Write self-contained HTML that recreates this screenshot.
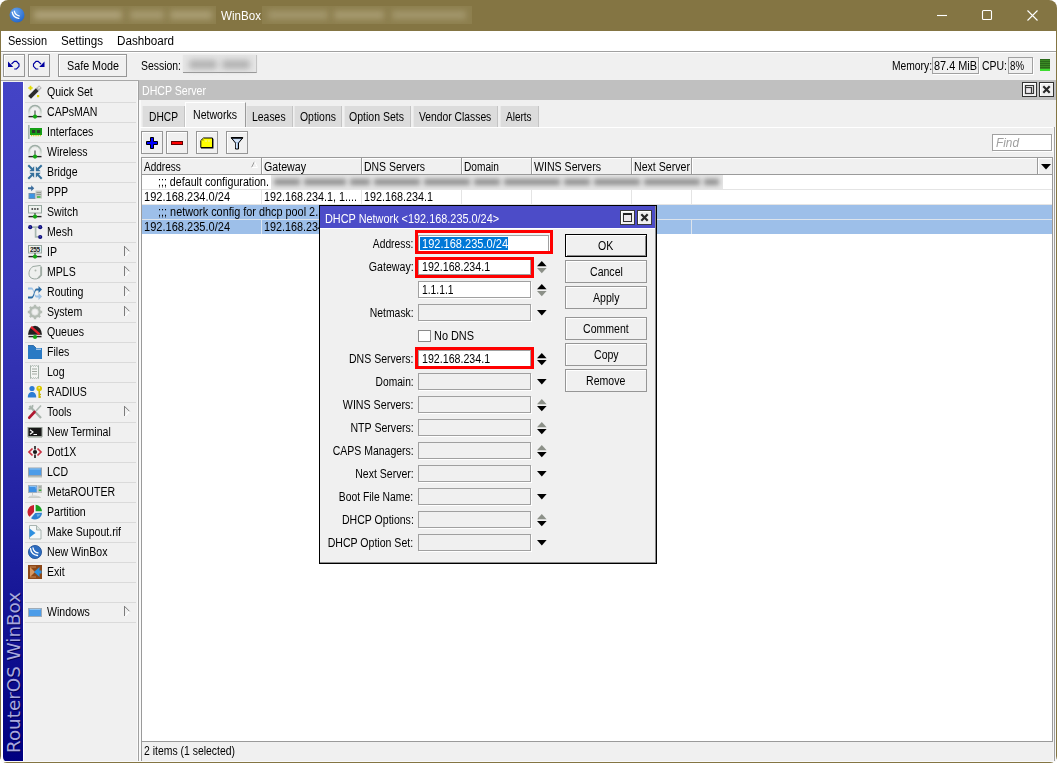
<!DOCTYPE html>
<html><head><meta charset="utf-8"><title>WinBox</title>
<style>
html,body{margin:0;padding:0}
body{width:1057px;height:763px;position:relative;overflow:hidden;background:#f0f0f0;font-family:"Liberation Sans",sans-serif;font-size:12px;color:#000}
div,span.t,svg{position:absolute;box-sizing:border-box}
span.t{white-space:nowrap;line-height:14px;height:14px}
.btn{background:#f0f0f0;border:1px solid #969696;box-shadow:inset 1px 1px 0 #fff}
.inp{background:#fff;border:1px solid #a0a0a0;box-shadow:1px 1px 0 #fff}
.inpd{background:#f0f0f0;border:1px solid #a0a0a0;box-shadow:1px 1px 0 #fff}
.red{border:3px solid #f00}
.tab{background:#dcdcdc}

</style></head>
<body>
<div class="" style="left:0px;top:0px;width:1057px;height:763px;background:#fff"></div>
<div class="" style="left:0px;top:0px;width:1057px;height:763px;background:#847543;border-radius:8px 8px 7px 7px"></div>
<div class="" style="left:1px;top:31px;width:1055px;height:20px;background:#fff"></div>
<div class="" style="left:1px;top:51px;width:1055px;height:711px;background:#f0f0f0;border-radius:0 0 6px 6px"></div>
<div class="" style="left:1px;top:81px;width:2px;height:681px;background:#fff;border-radius:0 0 0 6px"></div>
<div class="" style="left:23px;top:81px;width:1px;height:681px;background:#fff"></div>
<div class="" style="left:30px;top:6px;width:186px;height:18px;background:#8d7f4e;overflow:hidden"><div style="left:4px;top:5px;width:88px;height:8px;background:#b0a47c;filter:blur(3px)"></div><div style="left:100px;top:5px;width:34px;height:8px;background:#a89c72;filter:blur(3px)"></div><div style="left:140px;top:5px;width:42px;height:8px;background:#aca076;filter:blur(3px)"></div></div>
<div class="" style="left:262px;top:6px;width:210px;height:18px;background:#8d7f4e;overflow:hidden"><div style="left:6px;top:5px;width:60px;height:8px;background:#a4986e;filter:blur(3px)"></div><div style="left:72px;top:5px;width:50px;height:8px;background:#a89c72;filter:blur(3px)"></div><div style="left:130px;top:5px;width:74px;height:8px;background:#a4986e;filter:blur(3px)"></div></div>
<svg style="left:9px;top:7px" width="16" height="16" viewBox="0 0 16 16"><defs><radialGradient id="gi" cx=".4" cy=".3" r=".8"><stop offset="0" stop-color="#6aa8f0"/><stop offset="1" stop-color="#1d5fc4"/></radialGradient><linearGradient id="gw" x1="0" y1="0" x2="0" y2="1" gradientUnits="objectBoundingBox"><stop offset="0" stop-color="#9cacA4"/><stop offset=".5" stop-color="#bcc8c0"/><stop offset="1" stop-color="#e8ece8"/></linearGradient></defs><circle cx="8" cy="8" r="7.5" fill="url(#gi)"/><path d="M3.2 5.2c.6 3.6 3 5.8 6.6 6.2" stroke="#fff" stroke-width="1.3" fill="none" stroke-linecap="round"/><path d="M5.3 4.2c.5 2.6 2.3 4.2 4.9 4.6" stroke="#fff" stroke-width="1.2" fill="none" stroke-linecap="round"/></svg>
<span class="t" style="top:9px;left:221px;transform:scaleX(0.967);transform-origin:0 0;color:#fff;">WinBox</span>
<svg style="left:930px;top:0" width="127" height="31" viewBox="0 0 127 31"><g stroke="#fff" stroke-width="1.1" fill="none"><path d="M7 15.500h10"/><rect x="52.5" y="10.5" width="9" height="9" rx="1"/><path d="M97.5 10.5l10 10M107.5 10.5l-10 10"/></g></svg>
<span class="t" style="top:34px;left:8px;transform:scaleX(0.914);transform-origin:0 0;">Session</span>
<span class="t" style="top:34px;left:61px;transform:scaleX(0.969);transform-origin:0 0;">Settings</span>
<span class="t" style="top:34px;left:117px;transform:scaleX(0.971);transform-origin:0 0;">Dashboard</span>
<div class="" style="left:1px;top:51px;width:1055px;height:1px;background:#a0a0a0"></div>
<div class="" style="left:1px;top:52px;width:1055px;height:1px;background:#fff"></div>
<div class="" style="left:1px;top:80px;width:1055px;height:1px;background:#a8a8a8"></div>
<div class="btn" style="left:3px;top:54px;width:22px;height:23px;"></div>
<div class="btn" style="left:28px;top:54px;width:22px;height:23px;"></div>
<div class="btn" style="left:58px;top:54px;width:69px;height:23px;"></div>
<svg style="left:7px;top:58px" width="14" height="14" viewBox="0 0 14 14"><path d="M4.500 6L7.400 3.300H9.500L12 6V8.300L9.500 11H7.200" stroke="#0000a0" stroke-width="1.150" fill="none"/><path d="M1 3.600V9H6.300z" fill="#0000a0"/></svg>
<svg style="left:32px;top:58px" width="14" height="14" viewBox="0 0 14 14"><path d="M9 6L6.100 3.300H4L1.500 6V8.300L4 11H6.300" stroke="#0000a0" stroke-width="1.150" fill="none"/><path d="M12.500 3.600V9H7.200z" fill="#0000a0"/></svg>
<span class="t" style="top:59px;left:67px;transform:scaleX(0.896);transform-origin:0 0;">Safe Mode</span>
<span class="t" style="top:59px;left:141px;transform:scaleX(0.869);transform-origin:0 0;">Session:</span>
<div class="" style="left:183px;top:55px;width:74px;height:18px;background:#e6e6e6;border-bottom:1px solid #999;border-right:1px solid #c4c4c4;box-shadow:0 0 2px #e6e6e6"></div>
<div class="" style="left:189px;top:60px;width:28px;height:9px;background:#a8a8a8;filter:blur(3px);opacity:.85"></div>
<div class="" style="left:222px;top:60px;width:28px;height:9px;background:#a8a8a8;filter:blur(3px);opacity:.85"></div>
<span class="t" style="top:59px;left:892px;transform:scaleX(0.857);transform-origin:0 0;">Memory:</span>
<div class="inpd" style="left:932px;top:57px;width:47px;height:17px;"></div>
<span class="t" style="top:59px;left:934px;transform:scaleX(0.908);transform-origin:0 0;">87.4 MiB</span>
<span class="t" style="top:59px;left:982px;transform:scaleX(0.872);transform-origin:0 0;">CPU:</span>
<div class="inpd" style="left:1008px;top:57px;width:25px;height:17px;"></div>
<span class="t" style="top:59px;left:1010px;transform:scaleX(0.807);transform-origin:0 0;">8%</span>
<div class="" style="left:1040px;top:59px;width:10px;height:12px;background:repeating-linear-gradient(#2a6a1a 0,#2a6a1a 1px,#3a8a24 1px,#3a8a24 2px);border-bottom:2px solid #3ddc30"></div>
<div class="" style="left:3px;top:82px;width:20px;height:680px;background:linear-gradient(#4444c6 0,#3a3aba 30%,#2020a0 65%,#000080 100%);border-radius:0 0 0 5px"></div>
<span class="t" style="left:4px;top:753px;font-family:'DejaVu Sans',sans-serif;font-size:18px;line-height:20px;height:20px;color:#a8a8dc;text-shadow:-1px 1px 0 #000058;transform:rotate(-90deg) scaleX(1.018);transform-origin:0 0;" id="ros">RouterOS WinBox</span>
<div class="" style="left:25px;top:102px;width:111px;height:1px;background:#dadada"></div>
<span class="t" style="top:85px;left:47px;transform:scaleX(0.880);transform-origin:0 0;">Quick Set</span>
<svg style="left:27px;top:84px" width="16" height="16" viewBox="0 0 16 16"><path d="M2.600 13.400L10.800 5.200" stroke="#2c2c2c" stroke-width="4"/><path d="M10.200 5.800L13.400 2.600" stroke="#b4b4b4" stroke-width="3.800"/><path d="M11.400 4.600L12.800 3.200" stroke="#ececec" stroke-width="1.400"/><path d="M3.500 1.800v4.400M1.300 4h4.400" stroke="#e2dc00" stroke-width="1.700"/><rect x="10" y="11" width="2.200" height="2.200" fill="#e2dc00"/></svg>
<div class="" style="left:25px;top:122px;width:111px;height:1px;background:#dadada"></div>
<span class="t" style="top:105px;left:47px;transform:scaleX(0.880);transform-origin:0 0;">CAPsMAN</span>
<svg style="left:27px;top:104px" width="16" height="16" viewBox="0 0 16 16"><path d="M2.300 11V7.600A5.700 5.700 0 0 1 13.700 7.600V11" stroke="url(#gw)" stroke-width="2.200" fill="none"/><path d="M3.200 10.500V7.600A4.800 4.800 0 0 1 12.800 7.600V10.500" stroke="#e6eae6" stroke-width="1" fill="none"/><path d="M8 6.5v6" stroke="#505850" stroke-width="1.2"/><path d="M1.5 12.6h13" stroke="#282828" stroke-width="1.4"/><circle cx="8" cy="12.6" r="2.1" fill="#12a512"/></svg>
<div class="" style="left:25px;top:142px;width:111px;height:1px;background:#dadada"></div>
<span class="t" style="top:125px;left:47px;transform:scaleX(0.880);transform-origin:0 0;">Interfaces</span>
<svg style="left:27px;top:124px" width="16" height="16" viewBox="0 0 16 16"><rect x="1" y="1" width="1.6" height="14" fill="#a4b4ac"/><rect x="3" y="4" width="12" height="7" fill="#16a016"/><rect x="5" y="6" width="3.2" height="3" fill="#2c3a2c"/><rect x="10" y="6" width="3.2" height="3" fill="#2c3a2c"/><path d="M4 11.6h10" stroke="#c8d020" stroke-width="1.2" stroke-dasharray="1.2 1"/></svg>
<div class="" style="left:25px;top:162px;width:111px;height:1px;background:#dadada"></div>
<span class="t" style="top:145px;left:47px;transform:scaleX(0.880);transform-origin:0 0;">Wireless</span>
<svg style="left:27px;top:144px" width="16" height="16" viewBox="0 0 16 16"><path d="M2.300 11V7.600A5.700 5.700 0 0 1 13.700 7.600V11" stroke="url(#gw)" stroke-width="2.200" fill="none"/><path d="M3.200 10.500V7.600A4.800 4.800 0 0 1 12.800 7.600V10.500" stroke="#e6eae6" stroke-width="1" fill="none"/><path d="M8 6.5v6" stroke="#505850" stroke-width="1.2"/><path d="M1.5 12.6h13" stroke="#282828" stroke-width="1.4"/><circle cx="8" cy="12.6" r="2.1" fill="#12a512"/></svg>
<div class="" style="left:25px;top:182px;width:111px;height:1px;background:#dadada"></div>
<span class="t" style="top:165px;left:47px;transform:scaleX(0.880);transform-origin:0 0;">Bridge</span>
<svg style="left:27px;top:164px" width="16" height="16" viewBox="0 0 16 16"><path d="M1.300 1.300L5 5" stroke="#34709c" stroke-width="2"/><path d="M7.200 7.200V2.300L2.300 7.200z" fill="#34709c"/><g transform="translate(16 0) scale(-1 1)"><path d="M1.300 1.300L5 5" stroke="#34709c" stroke-width="2"/><path d="M7.200 7.200V2.300L2.300 7.200z" fill="#34709c"/></g><g transform="translate(0 16) scale(1 -1)"><path d="M1.300 1.300L5 5" stroke="#34709c" stroke-width="2"/><path d="M7.200 7.200V2.300L2.300 7.200z" fill="#34709c"/></g><g transform="translate(16 16) scale(-1 -1)"><path d="M1.300 1.300L5 5" stroke="#34709c" stroke-width="2"/><path d="M7.200 7.200V2.300L2.300 7.200z" fill="#34709c"/></g></svg>
<div class="" style="left:25px;top:202px;width:111px;height:1px;background:#dadada"></div>
<span class="t" style="top:185px;left:47px;transform:scaleX(0.880);transform-origin:0 0;">PPP</span>
<svg style="left:27px;top:184px" width="16" height="16" viewBox="0 0 16 16"><path d="M1 3.2h3.2v-2l3 3-3 3v-2h-3.2z" fill="#3a6c9c"/><rect x="2" y="9.5" width="6" height="5" fill="#3c94e4" stroke="#7090b0" stroke-width="1"/><rect x="8.5" y="6.5" width="6.5" height="8" fill="#c4c8c4"/><path d="M9.5 8.5h4.5M9.5 10.5h4.5" stroke="#909890" stroke-width="1"/><path d="M10 13h3.5" stroke="#18b018" stroke-width="1.2"/></svg>
<div class="" style="left:25px;top:222px;width:111px;height:1px;background:#dadada"></div>
<span class="t" style="top:205px;left:47px;transform:scaleX(0.880);transform-origin:0 0;">Switch</span>
<svg style="left:27px;top:204px" width="16" height="16" viewBox="0 0 16 16"><rect x="1.5" y="1.5" width="13" height="7.5" fill="#eef2ee" stroke="#98a8a0" stroke-width="1"/><path d="M8 9v3" stroke="#404840" stroke-width="1.2"/><path d="M1.5 12.6h13" stroke="#282828" stroke-width="1.4"/><circle cx="8" cy="12.6" r="2.1" fill="#12a512"/><path d="M4.5 5h7" stroke="#202020" stroke-width="1.6" stroke-dasharray="1.6 1.1"/></svg>
<div class="" style="left:25px;top:242px;width:111px;height:1px;background:#dadada"></div>
<span class="t" style="top:225px;left:47px;transform:scaleX(0.880);transform-origin:0 0;">Mesh</span>
<svg style="left:27px;top:224px" width="16" height="16" viewBox="0 0 16 16"><path d="M5 3.2h6.5M8.6 3.2v9.6h3" stroke="#a8b8b0" stroke-width="1.7" fill="none"/><circle cx="3.2" cy="3.2" r="2.1" fill="#10107c"/><circle cx="13.2" cy="3.2" r="2.1" fill="#10107c"/><circle cx="13.2" cy="13" r="2.1" fill="#10107c"/><circle cx="3.2" cy="3" r=".7" fill="#5050c0"/><circle cx="13.2" cy="3" r=".7" fill="#5050c0"/><circle cx="13.2" cy="12.8" r=".7" fill="#5050c0"/></svg>
<div class="" style="left:25px;top:262px;width:111px;height:1px;background:#dadada"></div>
<span class="t" style="top:245px;left:47px;transform:scaleX(0.880);transform-origin:0 0;">IP</span>
<svg style="left:27px;top:244px" width="16" height="16" viewBox="0 0 16 16"><rect x="1.5" y="1.5" width="13" height="7.5" fill="#eef2ee" stroke="#98a8a0" stroke-width="1"/><path d="M8 9v3" stroke="#404840" stroke-width="1.2"/><path d="M1.5 12.6h13" stroke="#282828" stroke-width="1.4"/><circle cx="8" cy="12.6" r="2.1" fill="#12a512"/><text x="8" y="7.6" font-size="6.4" font-weight="bold" text-anchor="middle" font-family="Liberation Sans,sans-serif" fill="#202020" textLength="10">255</text></svg>
<svg style="left:124px;top:246px" width="7" height="11" viewBox="0 0 7 11"><path d="M1.200 9.800l4.500-4.500" stroke="#fff" stroke-width="1.200" fill="none"/><path d="M.5 0v10M.5 .3l5 5" stroke="#7c7c7c" stroke-width="1" fill="none"/></svg>
<div class="" style="left:25px;top:282px;width:111px;height:1px;background:#dadada"></div>
<span class="t" style="top:265px;left:47px;transform:scaleX(0.880);transform-origin:0 0;">MPLS</span>
<svg style="left:27px;top:264px" width="16" height="16" viewBox="0 0 16 16"><path d="M6 2.5L13 1.5l1.2 1v8.5l-3 3.2c-2 1.2-6 1.2-8.200-1.2c-2.300-3.500-.5-8.500 3-10.500z" fill="#eef0ee" stroke="#9aa8a0" stroke-width="1"/><path d="M14.200 3v8l-3 3.200" stroke="#a0aca4" stroke-width="1.800" fill="none"/><circle cx="8.500" cy="6.500" r="1" fill="#b0b8b0"/></svg>
<svg style="left:124px;top:266px" width="7" height="11" viewBox="0 0 7 11"><path d="M1.200 9.800l4.500-4.500" stroke="#fff" stroke-width="1.200" fill="none"/><path d="M.5 0v10M.5 .3l5 5" stroke="#7c7c7c" stroke-width="1" fill="none"/></svg>
<div class="" style="left:25px;top:302px;width:111px;height:1px;background:#dadada"></div>
<span class="t" style="top:285px;left:47px;transform:scaleX(0.880);transform-origin:0 0;">Routing</span>
<svg style="left:27px;top:284px" width="16" height="16" viewBox="0 0 16 16"><path d="M1 12.500h3.500c2.500 0 2.500-8 5-8h2v-2.500l3.500 3.500-3.500 3.500v-2.500h-2c-2 0-2 8-5 8h-3.500z" fill="#2c6ca4"/><path d="M1 3.500h3.500c2.500 0 2.500 8 5 8h2v-2.500l3.500 3.500-3.500 3.500v-2.500h-2c-2.500 0-2.500-8-5-8h-3.500z" fill="#8cb8e4" opacity=".85"/></svg>
<svg style="left:124px;top:286px" width="7" height="11" viewBox="0 0 7 11"><path d="M1.200 9.800l4.500-4.500" stroke="#fff" stroke-width="1.200" fill="none"/><path d="M.5 0v10M.5 .3l5 5" stroke="#7c7c7c" stroke-width="1" fill="none"/></svg>
<div class="" style="left:25px;top:322px;width:111px;height:1px;background:#dadada"></div>
<span class="t" style="top:305px;left:47px;transform:scaleX(0.880);transform-origin:0 0;">System</span>
<svg style="left:27px;top:304px" width="16" height="16" viewBox="0 0 16 16"><circle cx="8" cy="8" r="4.600" fill="none" stroke="#b4bcb4" stroke-width="2.600"/><g stroke="#b4bcb4" stroke-width="2.400"><path d="M8 .8v2.400M8 12.800v2.400M.8 8h2.400M12.800 8h2.400M2.900 2.900l1.700 1.700M11.400 11.400l1.700 1.700M13.100 2.900l-1.700 1.700M4.600 11.400l-1.700 1.700"/></g><circle cx="8" cy="8" r="3.300" fill="none" stroke="#d8dcd8" stroke-width=".8"/></svg>
<svg style="left:124px;top:306px" width="7" height="11" viewBox="0 0 7 11"><path d="M1.200 9.800l4.500-4.500" stroke="#fff" stroke-width="1.200" fill="none"/><path d="M.5 0v10M.5 .3l5 5" stroke="#7c7c7c" stroke-width="1" fill="none"/></svg>
<div class="" style="left:25px;top:342px;width:111px;height:1px;background:#dadada"></div>
<span class="t" style="top:325px;left:47px;transform:scaleX(0.880);transform-origin:0 0;">Queues</span>
<svg style="left:27px;top:324px" width="16" height="16" viewBox="0 0 16 16"><path d="M1 10.800A7 9 0 0 1 15 10.800z" fill="#202020"/><path d="M4 2.800L12.500 10.300" stroke="#e0202c" stroke-width="2.300"/><path d="M1.500 12.600h13" stroke="#282828" stroke-width="1.400"/><circle cx="8" cy="13" r="2.100" fill="#12a512"/></svg>
<div class="" style="left:25px;top:362px;width:111px;height:1px;background:#dadada"></div>
<span class="t" style="top:345px;left:47px;transform:scaleX(0.880);transform-origin:0 0;">Files</span>
<svg style="left:27px;top:344px" width="16" height="16" viewBox="0 0 16 16"><path d="M1 1.500h5.500l2.500 2.500h6v11h-14z" fill="#2a7ac4"/><path d="M9 5.200h5" stroke="#d8e8f8" stroke-width="1"/><path d="M1 1.500h5.500l2.500 2.500" stroke="#1c5c9c" stroke-width=".8" fill="none"/></svg>
<div class="" style="left:25px;top:382px;width:111px;height:1px;background:#dadada"></div>
<span class="t" style="top:365px;left:47px;transform:scaleX(0.880);transform-origin:0 0;">Log</span>
<svg style="left:27px;top:364px" width="16" height="16" viewBox="0 0 16 16"><path d="M3.500 1.500l1 .8 1-.8 1 .8 1-.8 1 .8 1-.8 1 .8 1-.8v13l-1-.8-1 .8-1-.8-1 .8-1-.8-1 .8-1-.8-1 .8z" fill="#f4f6f4" stroke="#a8b4ac" stroke-width="1"/><path d="M5 5h5M5 7.500h5M5 10h5" stroke="#a0a8a0" stroke-width="1"/></svg>
<div class="" style="left:25px;top:402px;width:111px;height:1px;background:#dadada"></div>
<span class="t" style="top:385px;left:47px;transform:scaleX(0.880);transform-origin:0 0;">RADIUS</span>
<svg style="left:27px;top:384px" width="16" height="16" viewBox="0 0 16 16"><circle cx="5" cy="4.500" r="2.600" fill="#2c7cd4"/><path d="M.8 13.500c0-4 2-5.500 4.200-5.500s4.200 1.500 4.200 5.500z" fill="#2c7cd4"/><circle cx="12.200" cy="4.500" r="2.800" fill="#dcc800"/><circle cx="12.200" cy="3.800" r=".9" fill="#f8f0a0"/><path d="M12.200 7v7M12.200 10.500h1.800M12.200 13h1.800" stroke="#c8b400" stroke-width="1.500" fill="none"/></svg>
<div class="" style="left:25px;top:422px;width:111px;height:1px;background:#dadada"></div>
<span class="t" style="top:405px;left:47px;transform:scaleX(0.880);transform-origin:0 0;">Tools</span>
<svg style="left:27px;top:404px" width="16" height="16" viewBox="0 0 16 16"><path d="M2.500 2L14 14" stroke="#a8b4ac" stroke-width="2.200"/><path d="M1.500 4.500a3 3 0 0 0 4-3.500" stroke="#a8b4ac" stroke-width="1.800" fill="none"/><path d="M14 1.500L9 7" stroke="#b0bab4" stroke-width="1.600"/><path d="M7.500 8L2.300 13.700" stroke="#b01830" stroke-width="2.700" stroke-linecap="round"/></svg>
<svg style="left:124px;top:406px" width="7" height="11" viewBox="0 0 7 11"><path d="M1.200 9.800l4.500-4.500" stroke="#fff" stroke-width="1.200" fill="none"/><path d="M.5 0v10M.5 .3l5 5" stroke="#7c7c7c" stroke-width="1" fill="none"/></svg>
<div class="" style="left:25px;top:442px;width:111px;height:1px;background:#dadada"></div>
<span class="t" style="top:425px;left:47px;transform:scaleX(0.880);transform-origin:0 0;">New Terminal</span>
<svg style="left:27px;top:424px" width="16" height="16" viewBox="0 0 16 16"><rect x="1" y="3.500" width="14" height="9" fill="#181818" stroke="#909890" stroke-width="1"/><path d="M1 13.200h14" stroke="#b0b8b0" stroke-width="1.200"/><path d="M3 5.800l3 2.200-3 2.200M6.500 10.500h3.500" stroke="#fff" stroke-width="1.100" fill="none"/></svg>
<div class="" style="left:25px;top:462px;width:111px;height:1px;background:#dadada"></div>
<span class="t" style="top:445px;left:47px;transform:scaleX(0.880);transform-origin:0 0;">Dot1X</span>
<svg style="left:27px;top:444px" width="16" height="16" viewBox="0 0 16 16"><path d="M5.500 4.500L2 8l3.500 3.500M10.500 4.500L14 8l-3.500 3.500" stroke="#c83040" stroke-width="1.700" fill="none"/><circle cx="8" cy="8" r="2.100" fill="#181818"/><path d="M8 2v3.500M8 10.500v3.500" stroke="#181818" stroke-width="1.600"/></svg>
<div class="" style="left:25px;top:482px;width:111px;height:1px;background:#dadada"></div>
<span class="t" style="top:465px;left:47px;transform:scaleX(0.880);transform-origin:0 0;">LCD</span>
<svg style="left:27px;top:464px" width="16" height="16" viewBox="0 0 16 16"><rect x="1.500" y="4" width="13" height="7.500" fill="#4c9ce8" stroke="#98a4b0" stroke-width="1"/><path d="M2.500 5h11" stroke="#8cc4f4" stroke-width="1"/><path d="M1 12.800h14" stroke="#a8b0a8" stroke-width="1.200"/></svg>
<div class="" style="left:25px;top:502px;width:111px;height:1px;background:#dadada"></div>
<span class="t" style="top:485px;left:47px;transform:scaleX(0.880);transform-origin:0 0;">MetaROUTER</span>
<svg style="left:27px;top:484px" width="16" height="16" viewBox="0 0 16 16"><rect x="1.500" y="1.500" width="8.500" height="7" fill="#3c90e4" stroke="#a0b0c0" stroke-width="1"/><path d="M2.500 2.500h6.500v2" stroke="#88c0f4" stroke-width="1" fill="none"/><rect x="11" y="1" width="4" height="8" fill="#c0c4c0"/><path d="M11.800 6.200h2.500" stroke="#18a818" stroke-width="1.200"/><path d="M11.800 3h2.500" stroke="#909890" stroke-width="1"/><path d="M5.500 9v2.500M1.500 13.500c1-2 9-2 12 0z" stroke="#c8ccc8" stroke-width="1" fill="#dcdcdc"/></svg>
<div class="" style="left:25px;top:522px;width:111px;height:1px;background:#dadada"></div>
<span class="t" style="top:505px;left:47px;transform:scaleX(0.880);transform-origin:0 0;">Partition</span>
<svg style="left:27px;top:504px" width="16" height="16" viewBox="0 0 16 16"><path d="M7 8V1A7 7 0 0 0 2.500 12.800z" fill="#c82030"/><path d="M8.600 7.200V.8A7 7 0 0 1 15 7.200z" fill="#18a020"/><path d="M8.200 9L15 8.800A7 7 0 0 1 4 14.200z" fill="#2c80d0"/><path d="M9.500 10.200l4-.2a5 5 0 0 1-3 3z" fill="#80c0f0" opacity=".7"/></svg>
<div class="" style="left:25px;top:542px;width:111px;height:1px;background:#dadada"></div>
<span class="t" style="top:525px;left:47px;transform:scaleX(0.880);transform-origin:0 0;">Make Supout.rif</span>
<svg style="left:27px;top:524px" width="16" height="16" viewBox="0 0 16 16"><path d="M2.500 1.500h7l4.500 4.500v9h-11.500z" fill="#f4f8f8" stroke="#a8b4b0" stroke-width="1"/><path d="M9.500 1.500v4.500h4.500" fill="#dce4e0" stroke="#a8b4b0" stroke-width="1"/><path d="M2.500 4.500l6 4.500-6 4.500z" fill="#2c90e0"/></svg>
<div class="" style="left:25px;top:562px;width:111px;height:1px;background:#dadada"></div>
<span class="t" style="top:545px;left:47px;transform:scaleX(0.880);transform-origin:0 0;">New WinBox</span>
<svg style="left:27px;top:544px" width="16" height="16" viewBox="0 0 16 16"><circle cx="8" cy="8" r="6.600" fill="#2c6cc0" stroke="#1c4c94" stroke-width=".8"/><path d="M3.500 4.500c.5 4 3 6.500 7 7" stroke="#fff" stroke-width="1.400" fill="none" stroke-linecap="round"/><path d="M6 3.800c.4 2.800 2.200 4.600 5 5" stroke="#fff" stroke-width="1.300" fill="none" stroke-linecap="round"/></svg>
<div class="" style="left:25px;top:582px;width:111px;height:1px;background:#dadada"></div>
<span class="t" style="top:565px;left:47px;transform:scaleX(0.880);transform-origin:0 0;">Exit</span>
<svg style="left:27px;top:564px" width="16" height="16" viewBox="0 0 16 16"><rect x="1" y="1" width="14" height="14" fill="#8c4818"/><path d="M3 3l5 5-5 5z" fill="#d89860"/><path d="M3 3h6M3 13h6" stroke="#c88850" stroke-width="1"/><path d="M7 8l5.500-5v3.500h2v3h-2v3.500z" fill="#2c90e0"/></svg>
<div class="" style="left:25px;top:602px;width:111px;height:1px;background:#dadada"></div>
<div class="" style="left:25px;top:622px;width:111px;height:1px;background:#dadada"></div>
<span class="t" style="top:605px;left:47px;transform:scaleX(0.880);transform-origin:0 0;">Windows</span>
<svg style="left:27px;top:604px" width="16" height="16" viewBox="0 0 16 16"><rect x="1.500" y="4.500" width="13" height="8" fill="#4c9ce8" stroke="#a0acb8" stroke-width="1"/><path d="M2.500 5.500h11" stroke="#8cc4f4" stroke-width="1"/></svg>
<svg style="left:124px;top:606px" width="7" height="11" viewBox="0 0 7 11"><path d="M1.200 9.800l4.500-4.500" stroke="#fff" stroke-width="1.200" fill="none"/><path d="M.5 0v10M.5 .3l5 5" stroke="#7c7c7c" stroke-width="1" fill="none"/></svg>
<div class="" style="left:137px;top:81px;width:1px;height:681px;background:#fafafa"></div>
<div class="" style="left:138px;top:81px;width:1px;height:681px;background:#a0a0a0"></div>
<div class="" style="left:139px;top:80px;width:917px;height:20px;background:#c0c0c0"></div>
<span class="t" style="top:84px;left:142px;transform:scaleX(0.883);transform-origin:0 0;color:#fff;">DHCP Server</span>
<div class="" style="left:139px;top:100px;width:2px;height:662px;background:#fafafa"></div>
<div class="" style="left:1053px;top:128px;width:1px;height:634px;background:#f6f6f6"></div>
<div class="" style="left:1054px;top:127px;width:1px;height:635px;background:#a0a0a0"></div>
<div class="" style="left:1055px;top:127px;width:1px;height:635px;background:#f8f8f8"></div>
<div class="" style="left:1px;top:761px;width:1055px;height:1px;background:#fafafa;border-radius:0 0 6px 6px"></div>
<div class="" style="left:1022px;top:82px;width:15px;height:15px;background:#f0f0f0;border:1px solid #333;box-shadow:inset 1px 1px 0 #fff"></div>
<div class="" style="left:1039px;top:82px;width:15px;height:15px;background:#f0f0f0;border:1px solid #333;box-shadow:inset 1px 1px 0 #fff"></div>
<svg style="left:1022px;top:82px" width="15" height="15" viewBox="0 0 15 15"><path d="M3.500 5.500v-2h8v8h-2" stroke="#383838" stroke-width="1.200" fill="none"/><rect x="3.500" y="5.500" width="6" height="6" stroke="#383838" stroke-width="1.200" fill="#ece8ec"/></svg>
<svg style="left:1039px;top:82px" width="15" height="15" viewBox="0 0 15 15"><path d="M4.300 4.300l6.400 6.400M10.700 4.300l-6.400 6.400" stroke="#282828" stroke-width="2.100" fill="none"/></svg>
<div class="tab" style="left:142px;top:106px;width:43px;height:21px;border-left:1px solid #e8e8e8;border-right:1px solid #c4c4c4"></div>
<span class="t" style="top:110px;left:149.4px;transform:scaleX(0.853);transform-origin:0 0;">DHCP</span>
<div class="tab" style="left:246px;top:106px;width:47px;height:21px;border-left:1px solid #e8e8e8;border-right:1px solid #c4c4c4"></div>
<span class="t" style="top:110px;left:252px;transform:scaleX(0.868);transform-origin:0 0;">Leases</span>
<div class="tab" style="left:294px;top:106px;width:48px;height:21px;border-left:1px solid #e8e8e8;border-right:1px solid #c4c4c4"></div>
<span class="t" style="top:110px;left:299.5px;transform:scaleX(0.868);transform-origin:0 0;">Options</span>
<div class="tab" style="left:344px;top:106px;width:67px;height:21px;border-left:1px solid #e8e8e8;border-right:1px solid #c4c4c4"></div>
<span class="t" style="top:110px;left:349.4px;transform:scaleX(0.876);transform-origin:0 0;">Option Sets</span>
<div class="tab" style="left:413px;top:106px;width:85px;height:21px;border-left:1px solid #e8e8e8;border-right:1px solid #c4c4c4"></div>
<span class="t" style="top:110px;left:419px;transform:scaleX(0.860);transform-origin:0 0;">Vendor Classes</span>
<div class="tab" style="left:500px;top:106px;width:39px;height:21px;border-left:1px solid #e8e8e8;border-right:1px solid #c4c4c4"></div>
<span class="t" style="top:110px;left:505.9px;transform:scaleX(0.835);transform-origin:0 0;">Alerts</span>
<div class="" style="left:185px;top:102px;width:61px;height:25px;background:#f0f0f0;border-left:1px solid #fff;border-top:1px solid #fff;border-right:1px solid #9a9a9a"></div>
<span class="t" style="top:108px;left:193.3px;transform:scaleX(0.880);transform-origin:0 0;">Networks</span>
<div class="" style="left:140px;top:127px;width:913px;height:1px;background:#fff"></div>
<div class="btn" style="left:141px;top:131px;width:22px;height:23px;"></div>
<div class="btn" style="left:166px;top:131px;width:22px;height:23px;"></div>
<div class="btn" style="left:196px;top:131px;width:22px;height:23px;"></div>
<div class="btn" style="left:226px;top:131px;width:22px;height:23px;"></div>
<svg style="left:145px;top:136px" width="14" height="14" viewBox="0 0 14 14"><path d="M5.500 1.500h3v4h4v3h-4v4h-3v-4h-4v-3h4z" fill="#00f" stroke="#000" stroke-width="1"/></svg>
<svg style="left:170px;top:136px" width="14" height="14" viewBox="0 0 14 14"><rect x="1.500" y="5.500" width="11" height="3" fill="#f00" stroke="#600000" stroke-width="1"/></svg>
<svg style="left:200px;top:136px" width="14" height="14" viewBox="0 0 14 14"><path d="M.8 4.500l2.700-2.500h9v9.500h-11.700z" fill="#ff0" stroke="#000" stroke-width="1"/><path d="M1 11.800h11.800v-9" stroke="#000" stroke-width="1.300" fill="none"/><path d="M5 5h6.500" stroke="#f4f4a0" stroke-width="1" stroke-dasharray="2 1"/><path d="M1 4.500h2.500v-2.500" stroke="#c0c000" stroke-width=".8" fill="none"/></svg>
<svg style="left:230px;top:136px" width="14" height="14" viewBox="0 0 14 14"><path d="M1.200 1.800h11.600l-4.300 5.200v6h-3v-6z" fill="#a4c0e4" stroke="#000" stroke-width="1"/><path d="M1.200 1.800h11.600" stroke="#000" stroke-width="1.600"/><path d="M6.300 7v5.200" stroke="#e8f0fc" stroke-width="1"/><path d="M3.500 3.200h7l-2.300 2.800h-2.400z" fill="#d8e6f8"/></svg>
<div class="inp" style="left:992px;top:134px;width:60px;height:17px;border-color:#a0a0a0"></div>
<span class="t" style="top:136px;left:996px;transform:scaleX(0.985);transform-origin:0 0;color:#a0a0a0;font-style:italic;">Find</span>
<div class="" style="left:141px;top:157px;width:1px;height:604px;background:#9a9a9a"></div>
<div class="" style="left:141px;top:157px;width:912px;height:585px;background:#fff;border:1px solid #9a9a9a"></div>
<div class="" style="left:142px;top:158px;width:910px;height:17px;background:#f0f0f0;border-top:1px solid #fff;border-bottom:1px solid #9a9a9a"></div>
<div class="" style="left:261px;top:158px;width:1px;height:16px;background:#9a9a9a"></div>
<div class="" style="left:262px;top:158px;width:1px;height:16px;background:#fff"></div>
<div class="" style="left:361px;top:158px;width:1px;height:16px;background:#9a9a9a"></div>
<div class="" style="left:362px;top:158px;width:1px;height:16px;background:#fff"></div>
<div class="" style="left:461px;top:158px;width:1px;height:16px;background:#9a9a9a"></div>
<div class="" style="left:462px;top:158px;width:1px;height:16px;background:#fff"></div>
<div class="" style="left:531px;top:158px;width:1px;height:16px;background:#9a9a9a"></div>
<div class="" style="left:532px;top:158px;width:1px;height:16px;background:#fff"></div>
<div class="" style="left:631px;top:158px;width:1px;height:16px;background:#9a9a9a"></div>
<div class="" style="left:632px;top:158px;width:1px;height:16px;background:#fff"></div>
<div class="" style="left:691px;top:158px;width:1px;height:16px;background:#9a9a9a"></div>
<div class="" style="left:692px;top:158px;width:1px;height:16px;background:#fff"></div>
<div class="" style="left:1037px;top:158px;width:1px;height:16px;background:#9a9a9a"></div>
<div class="" style="left:1038px;top:158px;width:1px;height:16px;background:#fff"></div>
<svg style="left:1041px;top:164px" width="10" height="6" viewBox="0 0 10 6"><path d="M0 0h10l-5 5.5z" fill="#000"/></svg>
<svg style="left:251px;top:161px" width="8" height="8" viewBox="0 0 8 8"><path d="M.5 6.5l3-6" stroke="#9a9a9a" fill="none"/><path d="M3.5 .5l3 6h-6" stroke="#fff" fill="none"/></svg>
<span class="t" style="top:160px;left:143.8px;transform:scaleX(0.834);transform-origin:0 0;">Address</span>
<span class="t" style="top:160px;left:263.6px;transform:scaleX(0.887);transform-origin:0 0;">Gateway</span>
<span class="t" style="top:160px;left:363.6px;transform:scaleX(0.871);transform-origin:0 0;">DNS Servers</span>
<span class="t" style="top:160px;left:463.6px;transform:scaleX(0.846);transform-origin:0 0;">Domain</span>
<span class="t" style="top:160px;left:533.6px;transform:scaleX(0.882);transform-origin:0 0;">WINS Servers</span>
<span class="t" style="top:160px;left:633.6px;transform:scaleX(0.884);transform-origin:0 0;">Next Server</span>
<div class="" style="left:142px;top:189px;width:910px;height:1px;background:#e4e4e4"></div>
<div class="" style="left:142px;top:204px;width:910px;height:1px;background:#e4e4e4"></div>
<div class="" style="left:142px;top:205px;width:910px;height:14px;background:#9dbfe9"></div>
<div class="" style="left:142px;top:219px;width:910px;height:1px;background:#dde4ec"></div>
<div class="" style="left:142px;top:220px;width:910px;height:14px;background:#9dbfe9"></div>
<div class="" style="left:261px;top:190px;width:1px;height:14px;background:#e4e4e4"></div>
<div class="" style="left:261px;top:220px;width:1px;height:14px;background:#dde4ec"></div>
<div class="" style="left:361px;top:190px;width:1px;height:14px;background:#e4e4e4"></div>
<div class="" style="left:361px;top:220px;width:1px;height:14px;background:#dde4ec"></div>
<div class="" style="left:461px;top:190px;width:1px;height:14px;background:#e4e4e4"></div>
<div class="" style="left:461px;top:220px;width:1px;height:14px;background:#dde4ec"></div>
<div class="" style="left:531px;top:190px;width:1px;height:14px;background:#e4e4e4"></div>
<div class="" style="left:531px;top:220px;width:1px;height:14px;background:#dde4ec"></div>
<div class="" style="left:631px;top:190px;width:1px;height:14px;background:#e4e4e4"></div>
<div class="" style="left:631px;top:220px;width:1px;height:14px;background:#dde4ec"></div>
<div class="" style="left:691px;top:190px;width:1px;height:14px;background:#e4e4e4"></div>
<div class="" style="left:691px;top:220px;width:1px;height:14px;background:#dde4ec"></div>
<span class="t" style="top:175px;left:158px;transform:scaleX(0.890);transform-origin:0 0;">;;; default configuration.</span>
<span class="t" style="top:190px;left:144px;transform:scaleX(0.921);transform-origin:0 0;">192.168.234.0/24</span>
<span class="t" style="top:190px;left:264px;transform:scaleX(0.900);transform-origin:0 0;">192.168.234.1, 1....</span>
<span class="t" style="top:190px;left:364px;transform:scaleX(0.900);transform-origin:0 0;">192.168.234.1</span>
<span class="t" style="top:205px;left:158px;transform:scaleX(0.906);transform-origin:0 0;">;;; network config for dhcp pool 2.</span>
<span class="t" style="top:220px;left:144px;transform:scaleX(0.921);transform-origin:0 0;">192.168.235.0/24</span>
<span class="t" style="top:220px;left:264px;transform:scaleX(0.900);transform-origin:0 0;">192.168.234.1, 1....</span>
<div class="" style="left:271px;top:175px;width:452px;height:14px;overflow:hidden;background:#e6e6e6"><div style="left:3px;top:4px;width:26px;height:6px;background:#8c8c8c;filter:blur(2.500px)"></div><div style="left:33px;top:4px;width:42px;height:6px;background:#8c8c8c;filter:blur(2.500px)"></div><div style="left:79px;top:4px;width:20px;height:6px;background:#8c8c8c;filter:blur(2.500px)"></div><div style="left:103px;top:4px;width:46px;height:6px;background:#8c8c8c;filter:blur(2.500px)"></div><div style="left:153px;top:4px;width:46px;height:6px;background:#8c8c8c;filter:blur(2.500px)"></div><div style="left:203px;top:4px;width:26px;height:6px;background:#8c8c8c;filter:blur(2.500px)"></div><div style="left:233px;top:4px;width:56px;height:6px;background:#8c8c8c;filter:blur(2.500px)"></div><div style="left:293px;top:4px;width:26px;height:6px;background:#8c8c8c;filter:blur(2.500px)"></div><div style="left:323px;top:4px;width:46px;height:6px;background:#8c8c8c;filter:blur(2.500px)"></div><div style="left:373px;top:4px;width:56px;height:6px;background:#8c8c8c;filter:blur(2.500px)"></div><div style="left:433px;top:4px;width:15px;height:6px;background:#8c8c8c;filter:blur(2.500px)"></div></div>
<div class="" style="left:142px;top:742px;width:911px;height:19px;background:#f0f0f0"></div>
<span class="t" style="top:744px;left:144px;transform:scaleX(0.869);transform-origin:0 0;">2 items (1 selected)</span>
<div class="" style="left:319px;top:205px;width:338px;height:359px;background:#f0f0f0;border:1px solid #000;box-shadow:inset -1px -1px 0 #8c8c8c"></div>
<div class="" style="left:320px;top:206px;width:335px;height:22px;background:#4c4cc8"></div>
<div class="" style="left:320px;top:228px;width:335px;height:1px;background:#fff"></div>
<span class="t" style="top:212px;left:325.3px;transform:scaleX(0.907);transform-origin:0 0;color:#fff;">DHCP Network &lt;192.168.235.0/24&gt;</span>
<div class="" style="left:620px;top:210px;width:15px;height:15px;background:#f0f0f0;border:1px solid #3a3a3a;box-shadow:inset 1px 1px 0 #fff"></div>
<div class="" style="left:637px;top:210px;width:15px;height:15px;background:#f0f0f0;border:1px solid #3a3a3a;box-shadow:inset 1px 1px 0 #fff"></div>
<svg style="left:620px;top:210px" width="15" height="15" viewBox="0 0 15 15"><rect x="3.500" y="3.500" width="8" height="8" stroke="#303030" fill="#ece8ec"/><path d="M3 4.200h9" stroke="#202020" stroke-width="1.600"/></svg>
<svg style="left:637px;top:210px" width="15" height="15" viewBox="0 0 15 15"><path d="M4.300 4.300l6.400 6.400M10.700 4.300l-6.400 6.400" stroke="#282828" stroke-width="2.200" fill="none"/></svg>
<span class="t" style="top:237px;right:643.5px;transform:scaleX(0.855);transform-origin:100% 0;">Address:</span>
<div class="inp" style="left:418px;top:235px;width:131px;height:17px;"></div>
<span class="t" style="top:260px;right:643.5px;transform:scaleX(0.886);transform-origin:100% 0;">Gateway:</span>
<div class="inp" style="left:418px;top:258px;width:113px;height:17px;"></div>
<svg style="left:537px;top:261px" width="10" height="13" viewBox="0 0 10 13"><path d="M0 5.3h9.6l-4.8-5.3z" fill="#000"/><path d="M0 6.900h9.600l-4.800 5.300z" fill="#8c9088"/></svg>
<div class="inp" style="left:418px;top:281px;width:113px;height:17px;"></div>
<svg style="left:537px;top:284px" width="10" height="13" viewBox="0 0 10 13"><path d="M0 5.3h9.6l-4.8-5.3z" fill="#000"/><path d="M0 6.900h9.600l-4.800 5.300z" fill="#8c9088"/></svg>
<span class="t" style="top:306px;right:643.5px;transform:scaleX(0.866);transform-origin:100% 0;">Netmask:</span>
<div class="inpd" style="left:418px;top:304px;width:113px;height:17px;"></div>
<svg style="left:537px;top:310px" width="10" height="6" viewBox="0 0 10 6"><path d="M0 0h9.6l-4.8 5.5z" fill="#000"/></svg>
<div class="" style="left:418px;top:330px;width:13px;height:12px;background:#fff;border:1px solid #8a8a8a"></div>
<span class="t" style="top:329px;left:434px;transform:scaleX(0.909);transform-origin:0 0;">No DNS</span>
<span class="t" style="top:352px;right:643.5px;transform:scaleX(0.877);transform-origin:100% 0;">DNS Servers:</span>
<div class="inp" style="left:418px;top:350px;width:113px;height:17px;"></div>
<svg style="left:537px;top:353px" width="10" height="13" viewBox="0 0 10 13"><path d="M0 5.3h9.6l-4.8-5.3z" fill="#000"/><path d="M0 6.900h9.600l-4.800 5.300z" fill="#000"/></svg>
<span class="t" style="top:375px;right:643.5px;transform:scaleX(0.853);transform-origin:100% 0;">Domain:</span>
<div class="inpd" style="left:418px;top:373px;width:113px;height:17px;"></div>
<svg style="left:537px;top:379px" width="10" height="6" viewBox="0 0 10 6"><path d="M0 0h9.6l-4.8 5.5z" fill="#000"/></svg>
<span class="t" style="top:398px;right:643.5px;transform:scaleX(0.889);transform-origin:100% 0;">WINS Servers:</span>
<div class="inpd" style="left:418px;top:396px;width:113px;height:17px;"></div>
<svg style="left:537px;top:399px" width="10" height="13" viewBox="0 0 10 13"><path d="M0 5.3h9.6l-4.8-5.3z" fill="#8c9088"/><path d="M0 6.900h9.600l-4.800 5.300z" fill="#000"/></svg>
<span class="t" style="top:421px;right:643.5px;transform:scaleX(0.882);transform-origin:100% 0;">NTP Servers:</span>
<div class="inpd" style="left:418px;top:419px;width:113px;height:17px;"></div>
<svg style="left:537px;top:422px" width="10" height="13" viewBox="0 0 10 13"><path d="M0 5.3h9.6l-4.8-5.3z" fill="#8c9088"/><path d="M0 6.900h9.600l-4.800 5.300z" fill="#000"/></svg>
<span class="t" style="top:444px;right:643.5px;transform:scaleX(0.874);transform-origin:100% 0;">CAPS Managers:</span>
<div class="inpd" style="left:418px;top:442px;width:113px;height:17px;"></div>
<svg style="left:537px;top:445px" width="10" height="13" viewBox="0 0 10 13"><path d="M0 5.3h9.6l-4.8-5.3z" fill="#8c9088"/><path d="M0 6.900h9.600l-4.800 5.300z" fill="#000"/></svg>
<span class="t" style="top:467px;right:643.5px;transform:scaleX(0.877);transform-origin:100% 0;">Next Server:</span>
<div class="inpd" style="left:418px;top:465px;width:113px;height:17px;"></div>
<svg style="left:537px;top:471px" width="10" height="6" viewBox="0 0 10 6"><path d="M0 0h9.6l-4.8 5.5z" fill="#000"/></svg>
<span class="t" style="top:490px;right:643.5px;transform:scaleX(0.863);transform-origin:100% 0;">Boot File Name:</span>
<div class="inpd" style="left:418px;top:488px;width:113px;height:17px;"></div>
<svg style="left:537px;top:494px" width="10" height="6" viewBox="0 0 10 6"><path d="M0 0h9.6l-4.8 5.5z" fill="#000"/></svg>
<span class="t" style="top:513px;right:643.5px;transform:scaleX(0.878);transform-origin:100% 0;">DHCP Options:</span>
<div class="inpd" style="left:418px;top:511px;width:113px;height:17px;"></div>
<svg style="left:537px;top:514px" width="10" height="13" viewBox="0 0 10 13"><path d="M0 5.3h9.6l-4.8-5.3z" fill="#8c9088"/><path d="M0 6.900h9.600l-4.800 5.300z" fill="#000"/></svg>
<span class="t" style="top:536px;right:643.5px;transform:scaleX(0.880);transform-origin:100% 0;">DHCP Option Set:</span>
<div class="inpd" style="left:418px;top:534px;width:113px;height:17px;"></div>
<svg style="left:537px;top:540px" width="10" height="6" viewBox="0 0 10 6"><path d="M0 0h9.6l-4.8 5.5z" fill="#000"/></svg>
<div class="red" style="left:415px;top:230px;width:138px;height:24px;"></div>
<div class="red" style="left:415px;top:257px;width:119px;height:21px;"></div>
<div class="red" style="left:415px;top:347px;width:119px;height:22px;"></div>
<div class="" style="left:420px;top:237px;width:88px;height:13px;background:#0078d7"></div>
<span class="t" style="top:237px;left:421.7px;transform:scaleX(0.921);transform-origin:0 0;color:#fff;">192.168.235.0/24</span>
<span class="t" style="top:260px;left:421.7px;transform:scaleX(0.887);transform-origin:0 0;">192.168.234.1</span>
<span class="t" style="top:283px;left:421.7px;transform:scaleX(0.859);transform-origin:0 0;">1.1.1.1</span>
<span class="t" style="top:352px;left:421.7px;transform:scaleX(0.887);transform-origin:0 0;">192.168.234.1</span>
<div class="btn" style="left:565px;top:234px;width:82px;height:23px;border-color:#000;box-shadow:inset 1px 1px 0 #fff,inset -1px -1px 0 #8a8a8a"></div>
<span class="t" style="top:239px;left:598.375625px;transform:scaleX(0.880);transform-origin:0 0;">OK</span>
<div class="btn" style="left:565px;top:260px;width:82px;height:23px;"></div>
<span class="t" style="top:265px;left:589.561875px;transform:scaleX(0.880);transform-origin:0 0;">Cancel</span>
<div class="btn" style="left:565px;top:286px;width:82px;height:23px;"></div>
<span class="t" style="top:291px;left:592.793125px;transform:scaleX(0.880);transform-origin:0 0;">Apply</span>
<div class="btn" style="left:565px;top:317px;width:82px;height:23px;"></div>
<span class="t" style="top:322px;left:583.113125px;transform:scaleX(0.880);transform-origin:0 0;">Comment</span>
<div class="btn" style="left:565px;top:343px;width:82px;height:23px;"></div>
<span class="t" style="top:348px;left:593.673125px;transform:scaleX(0.880);transform-origin:0 0;">Copy</span>
<div class="btn" style="left:565px;top:369px;width:82px;height:23px;"></div>
<span class="t" style="top:374px;left:586.3375px;transform:scaleX(0.880);transform-origin:0 0;">Remove</span>
</body></html>
